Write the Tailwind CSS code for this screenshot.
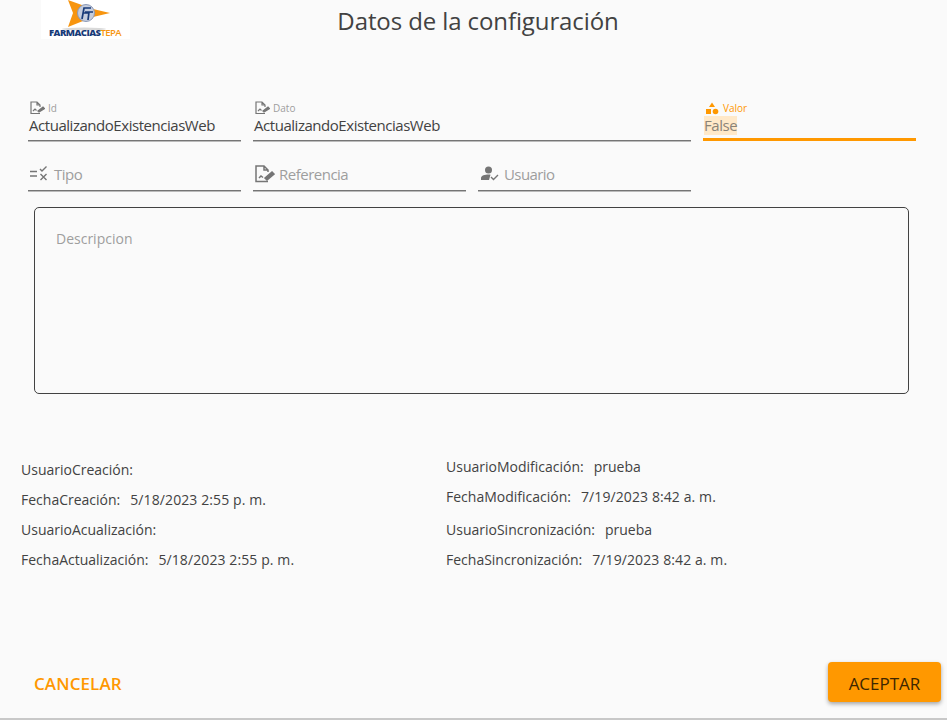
<!DOCTYPE html>
<html lang="es">
<head>
  <meta charset="UTF-8">
  <title>Datos de la configuración</title>
  <script src="https://cdn.jsdelivr.net/npm/@tailwindcss/browser@4"></script>
</head>
<body class="bg-[#fafafa] font-['Open_Sans',sans-serif] text-[#424242]">
<div class="w-[947px] h-[720px] overflow-hidden flex flex-col border-b-2 border-[#c8c8c8]">

  <!-- Header -->
  <div class="relative h-[100px] shrink-0">
    <div class="absolute left-[41px] top-0 w-[89px] h-[39px] bg-white">
      <svg class="absolute left-0 top-0" width="89" height="32" viewBox="0 0 89 32">
        <ellipse cx="43" cy="29" rx="22" ry="1.500" fill="#d9d9d9"/>
        <path d="M27 0 L52 9 L69 13 L52 17 L27 27 L32 13 Z" fill="#f7950f"/>
        <circle cx="45" cy="13" r="8.500" fill="#c5cddd" stroke="#8d9ab8"/>
        <path d="M41 19 L43 8 H50 M42 13 H47 M44 12 H52 M48 12 L47 20" fill="none" stroke="#173a78" stroke-width="1.700"/>
      </svg>
      <div class="absolute left-[8px] top-[28px] text-[9.5px] leading-[10px] font-extrabold tracking-[-0.55px] whitespace-nowrap text-[#173a78]">FARMACIAS<span class="font-semibold text-[#f7950f]">TEPA</span></div>
    </div>
    <h1 class="pt-[3px] pl-[9px] text-center text-[24px] leading-[36px] tracking-[-0.1px] font-normal text-[#424242]">Datos de la configuración</h1>
  </div>

  <!-- Fields -->
  <div class="grid grid-cols-[213px_213px_213px_213px] gap-x-3 pl-[28px]">
    <div class="h-[41px] border-b border-[#757575] shadow-[0_1px_0_#bbb]">
      <div class="flex items-center h-[16px] pl-[2px] gap-[3px] text-[10px] text-[#9e9e9e]">
        <svg width="15" height="14" viewBox="0 0 15 14" fill="none" stroke="#757575" stroke-width="1.2"><path d="M10 12.500H1V1H7L10 4V6M7 1V4H10" /><path d="M3 10L5 8L6.500 9.500" /><path d="M8 10L13 6L14.500 7.500L9 11Z" fill="#757575"/></svg>
        <span>Id</span>
      </div>
      <div class="pl-px text-[15px] leading-[20px] -mt-px tracking-[-0.46px] text-[#424242] whitespace-nowrap">ActualizandoExistenciasWeb</div>
    </div>
    <div class="col-span-2 h-[41px] border-b border-[#757575] shadow-[0_1px_0_#bbb]">
      <div class="flex items-center h-[16px] pl-[2px] gap-[3px] text-[10px] text-[#9e9e9e]">
        <svg width="15" height="14" viewBox="0 0 15 14" fill="none" stroke="#757575" stroke-width="1.2"><path d="M10 12.500H1V1H7L10 4V6M7 1V4H10" /><path d="M3 10L5 8L6.500 9.500" /><path d="M8 10L13 6L14.500 7.500L9 11Z" fill="#757575"/></svg>
        <span>Dato</span>
      </div>
      <div class="pl-px text-[15px] leading-[20px] -mt-px tracking-[-0.46px] text-[#424242] whitespace-nowrap">ActualizandoExistenciasWeb</div>
    </div>
    <div class="h-[41px] border-b-[3px] border-[#ff9800]">
      <div class="flex items-center h-[16px] pl-[2px] gap-[4px] text-[10px] text-[#ff9800]">
        <svg width="14" height="13" viewBox="0 0 14 13" fill="#ff9800"><path d="M7 0.500L10 5H4Z"/><rect x="1" y="7" width="5" height="5"/><circle cx="10.500" cy="9.500" r="2.800"/></svg>
        <span>Valor</span>
      </div>
      <div class="pl-px text-[15px] leading-[20px] -mt-px tracking-[-0.46px] text-[#8a8377]"><span class="bg-[#ffe9c9] inline-block h-[19px] leading-[19px]">False</span></div>
    </div>
  </div>

  <div class="grid grid-cols-[213px_213px_213px] gap-x-3 pl-[28px] mt-[19px]">
    <div class="h-[31px] flex items-start gap-[6px] pl-[2px] pt-[4px] border-b border-[#757575] shadow-[0_1px_0_#bbb] text-[15px] leading-[20px] tracking-[-0.5px] text-[#9e9e9e]">
      <svg class="mt-[2px]" width="18" height="15" viewBox="0 0 18 15" fill="none" stroke="#757575" stroke-width="1.400"><path d="M0 5.500H7M0 10H7" /><path d="M10 3L12 5L16.500 0.500M10.500 8L16.500 14M16.500 8L10.500 14"/></svg>
      <span>Tipo</span>
    </div>
    <div class="h-[31px] flex items-start gap-[4px] pl-[2px] pt-[4px] border-b border-[#757575] shadow-[0_1px_0_#bbb] text-[15px] leading-[20px] tracking-[-0.5px] text-[#9e9e9e]">
      <svg class="mt-[1px]" width="20" height="18" viewBox="0 0 20 18" fill="none" stroke="#757575" stroke-width="1.500"><path d="M13 16.500H1V1H9L13 5V7M9 1V5H13" /><path d="M4 13L6 11L8 12.500" /><path d="M10 13L17 7L19 9L12 15Z" fill="#757575"/></svg>
      <span>Referencia</span>
    </div>
    <div class="h-[31px] flex items-start gap-[5px] pl-[3px] pt-[4px] border-b border-[#757575] shadow-[0_1px_0_#bbb] text-[15px] leading-[20px] tracking-[-0.6px] text-[#9e9e9e]">
      <svg class="mt-[2px]" width="18" height="15" viewBox="0 0 18 15" fill="#757575"><circle cx="7.500" cy="4" r="3.500"/><path d="M0 14V12C0 9.500 4 8.500 7.500 8.500C8.500 8.500 9 8.600 9.500 8.700L8 14Z"/><path d="M10 11L12.500 13.500L17 9" fill="none" stroke="#757575" stroke-width="1.400"/></svg>
      <span>Usuario</span>
    </div>
  </div>

  <!-- Descripcion -->
  <div class="ml-[34px] mt-[16px] w-[875px] h-[187px] border border-[#424242] rounded-[5px] pl-[21px] pt-[21px] text-[14px] leading-[20px] text-[#9e9e9e]">Descripcion</div>

  <!-- Audit data -->
  <div class="grid grid-cols-[425px_1fr] pl-[21px] mt-[56px] text-[14px] leading-[20px] text-[#424242]">
    <div class="flex flex-col pt-[10px]">
      <div class="h-[30px]">UsuarioCreación:</div>
      <div class="h-[30px]">FechaCreación:<span class="ml-[10px] tracking-[0.1px]">5/18/2023 2:55 p. m.</span></div>
      <div class="h-[30px]">UsuarioAcualización:</div>
      <div class="h-[30px]">FechaActualización:<span class="ml-[10px] tracking-[0.1px]">5/18/2023 2:55 p. m.</span></div>
    </div>
    <div class="flex flex-col pt-[7px]">
      <div class="h-[30px]">UsuarioModificación:<span class="ml-[10px]">prueba</span></div>
      <div class="h-[33px]">FechaModificación:<span class="ml-[10px] tracking-[0.1px]">7/19/2023 8:42 a. m.</span></div>
      <div class="h-[30px]">UsuarioSincronización:<span class="ml-[10px]">prueba</span></div>
      <div class="h-[30px]">FechaSincronización:<span class="ml-[10px] tracking-[0.1px]">7/19/2023 8:42 a. m.</span></div>
    </div>
  </div>

  <!-- Actions -->
  <div class="flex items-center justify-between pl-[34px] pr-[6px] mt-auto mb-[16px]">
    <button class="pt-[3px] text-[17px] tracking-[0.1px] font-semibold text-[#ff9800]">CANCELAR</button>
    <button class="w-[113px] h-[40px] pt-[3px] rounded-[4px] bg-[#ff9800] text-[17px] font-medium text-[#3d2600] shadow-[0_2px_4px_rgba(0,0,0,0.35)]">ACEPTAR</button>
  </div>
</div>
</body>
</html>
